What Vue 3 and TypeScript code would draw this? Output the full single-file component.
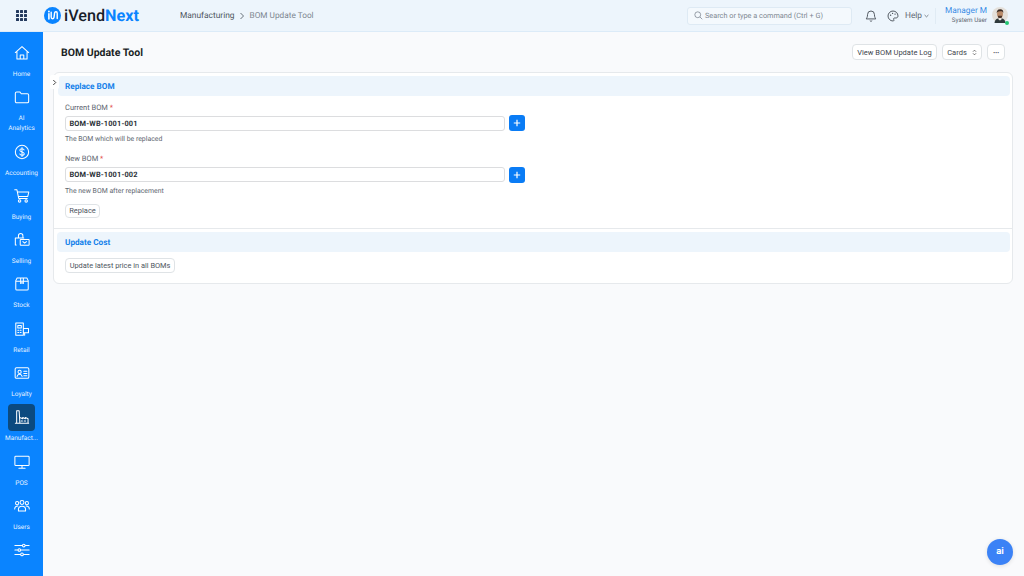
<script setup lang="ts">
interface NavItem { label: string; icon: string; active?: boolean }
const nav: NavItem[] = [
  { label: 'Home', icon: 'home' },
  { label: 'AI\nAnalytics', icon: 'folder' },
  { label: 'Accounting', icon: 'dollar' },
  { label: 'Buying', icon: 'cart' },
  { label: 'Selling', icon: 'sell' },
  { label: 'Stock', icon: 'box' },
  { label: 'Retail', icon: 'retail' },
  { label: 'Loyalty', icon: 'loyalty' },
  { label: 'Manufact...', icon: 'factory', active: true },
  { label: 'POS', icon: 'pos' },
  { label: 'Users', icon: 'users' },
  { label: '', icon: 'sliders' },
]
const dots = Array.from({ length: 9 }, (_, i) => i)
</script>

<template>
  <div class="app">
    <header class="topbar">
      <div class="brand">
        <div class="grid-icon"><i v-for="d in dots" :key="d"></i></div>
        <svg class="logo" viewBox="0 0 18 18">
          <circle cx="9" cy="9" r="9" fill="#0a84ff" />
          <path d="M5.2 7.2v5.4" stroke="#fff" stroke-width="1.7" stroke-linecap="round" fill="none" />
          <circle cx="5.2" cy="4.8" r="1" fill="#fff" />
          <path d="M7.6 5.5v5.2c0 2.2 2.6 2.2 3 .2l.6-4.6c.3-1.8 2.8-1.6 2.8.2v5.6" stroke="#fff" stroke-width="1.5" stroke-linecap="round" fill="none" />
        </svg>
        <div class="wordmark">iVend<b>Next</b></div>
      </div>
      <nav class="crumbs">
        <span class="crumb-a">Manufacturing</span>
        <svg class="crumb-sep" viewBox="0 0 6 8"><path d="M1.5 1l3 3-3 3" fill="none" stroke="#68717a" stroke-width="1" /></svg>
        <span class="crumb-b">BOM Update Tool</span>
      </nav>
      <div class="top-right">
        <div class="search">
          <svg viewBox="0 0 12 12" class="search-ic"><circle cx="5" cy="5" r="3.9" fill="none" stroke="#6b7480" stroke-width=".9" /><path d="M8 8l3 3" stroke="#6b7480" stroke-width=".9" /></svg>
          <span>Search or type a command (Ctrl + G)</span>
        </div>
        <svg class="bell" viewBox="0 0 14 14"><path d="M7 1.2a4 4 0 0 0-4 4c0 3.4-1.3 4.6-1.6 5.2h11.2c-.3-.6-1.6-1.8-1.6-5.2a4 4 0 0 0-4-4zM5.6 12.4c.4.8 2.4.8 2.8 0" fill="none" stroke="#3b424a" stroke-width="1" stroke-linejoin="round" /></svg>
        <svg class="palette" viewBox="0 0 14 14"><path d="M7 1.2a5.8 5.8 0 1 0 0 11.6c1.2 0 1.4-.9.9-1.6-.6-.8-.2-1.9 1-1.9h1.5c1.5 0 2.4-1 2.4-2.4C12.800 3.600 10.200 1.200 7 1.200z" fill="none" stroke="#3b424a" stroke-width="1" /><circle cx="4.200" cy="6" r=".8" fill="#3b424a" /><circle cx="6.500" cy="3.900" r=".8" fill="#3b424a" /><circle cx="9.400" cy="4.800" r=".8" fill="#3b424a" /></svg>
        <div class="help">Help
          <svg viewBox="0 0 6 4" class="help-ch"><path d="M.7.8L3 3l2.300-2.200" fill="none" stroke="#555e68" stroke-width=".9" /></svg>
        </div>
        <div class="vline"></div>
        <div class="user">
          <div class="user-name">Manager M</div>
          <div class="user-role">System User</div>
        </div>
        <div class="avatar">
          <svg viewBox="0 0 16 16">
            <circle cx="8" cy="8" r="8" fill="#e4e0da" />
            <path d="M2.500 16c.3-3.600 2.500-4.800 5.500-4.800s5.200 1.200 5.500 4.800z" fill="#2f3a3c" />
            <path d="M6.500 10.500h3v2L8 13.500l-1.500-1z" fill="#f1ede7" />
            <ellipse cx="8" cy="7" rx="3" ry="3.800" fill="#b98a69" />
            <path d="M4.800 6.200C4.500 2.800 7 2.200 8.300 2.200c2.200 0 3.300 1.600 2.900 4-.4-1.300-1-1.900-2-1.900-1.600.2-4 0-4.400 1.900z" fill="#3a2a22" />
            <path d="M6 8.800h4v1.600L8 11.200l-2-.8z" fill="#4b3428" />
          </svg>
          <span class="online"></span>
        </div>
      </div>
    </header>

    <div class="body">
      <aside class="sidebar">
        <div v-for="item in nav" :key="item.icon" class="nav-item">
          <div class="nav-icon" :class="{ active: item.active }">
            <svg viewBox="0 0 18 18" class="nav-svg">
              <g v-if="item.icon === 'home'">
                <path d="M1.500 8.500L9 1.800l7.500 6.700M3.300 7.200v8.600h11.400V7.200M7 15.800v-4.600h4v4.600" />
              </g>
              <g v-else-if="item.icon === 'folder'">
                <path d="M1.500 4.800c0-.9.600-1.500 1.500-1.500h3.500l1.700 2h6.800c.9 0 1.500.6 1.500 1.500v7.200c0 .9-.6 1.500-1.500 1.500H3c-.9 0-1.500-.6-1.500-1.500z" />
              </g>
              <g v-else-if="item.icon === 'dollar'">
                <circle cx="9" cy="9" r="7.500" />
                <path d="M11.300 6.700c-.3-1-1.200-1.400-2.300-1.400-1.300 0-2.400.7-2.400 1.800 0 2.500 4.900 1.300 4.900 3.800 0 1.100-1.100 1.800-2.500 1.800-1.200 0-2.200-.5-2.500-1.500M9 3.900v10.200" />
              </g>
              <g v-else-if="item.icon === 'cart'">
                <path d="M.8 2h2.500l2 9.800h9.600M4 4.500h12.700l-1.200 5H5" />
                <circle cx="6.300" cy="14.500" r="1.400" />
                <circle cx="13.700" cy="14.500" r="1.400" />
              </g>
              <g v-else-if="item.icon === 'sell'">
                <path d="M2.500 14.500H1.500V6.800h9.500M5 6.500V4.300a2.500 2.500 0 0 1 5 0v2.500" />
                <rect x="7" y="8.500" width="10" height="6.500" rx=".6" />
                <path d="M10 10.800l2 1.800 2-1.800" />
              </g>
              <g v-else-if="item.icon === 'box'">
                <path d="M3.500 2.200h11l1.500 3v9.300c0 .8-.5 1.300-1.300 1.300H3.300c-.8 0-1.300-.5-1.300-1.300V5.200zM2 5.800h14M7.500 2.200v6.300L9 7.500l1.500 1V2.200" />
              </g>
              <g v-else-if="item.icon === 'retail'">
                <path d="M2 16V2.200h8.500V16zM4.300 5h3.900v2.800H4.300zM4.300 10.500h1M7 10.500h1M4.300 13h1M7 13h1M10.500 8.500h5.800v4.800h-5.800M12 13.300V16" />
              </g>
              <g v-else-if="item.icon === 'loyalty'">
                <rect x="1.300" y="3" width="15.400" height="12" rx="1.500" />
                <circle cx="6.300" cy="7.800" r="1.800" />
                <path d="M3.500 12.800c.3-1.700 1.300-2.400 2.800-2.400s2.500.7 2.800 2.400M11 7h3.500M11 9.500h3.500M11 12h3.500" />
              </g>
              <g v-else-if="item.icon === 'factory'">
                <path d="M3 16V2h2.800l.8 14M1.500 16h15M6.500 9.500l3.300 1.500v-1.500l3 1.500V9.500l3 1.500V16" />
                <path d="M8 13.500h1.500M11.500 13.500H13" />
              </g>
              <g v-else-if="item.icon === 'pos'">
                <rect x="1" y="2.500" width="16" height="10.500" rx="1" />
                <path d="M9 13v3M5.500 16h7" />
              </g>
              <g v-else-if="item.icon === 'users'">
                <circle cx="9" cy="5" r="2.200" />
                <circle cx="3.500" cy="5.800" r="1.800" />
                <circle cx="14.500" cy="5.800" r="1.800" />
                <path d="M5 14.500v-1.800c0-2 1.700-3.500 4-3.500s4 1.500 4 3.500v1.800zM.8 12.300c0-2 1.200-3.400 3.600-3.400M17.200 12.300c0-2-1.200-3.400-3.600-3.400" />
              </g>
              <g v-else>
                <path d="M1 4h16M1 9h16M1 14h16" />
                <circle cx="11" cy="4" r="1.500" class="knob" />
                <circle cx="6" cy="9" r="1.500" class="knob" />
                <circle cx="9" cy="14" r="1.500" class="knob" />
              </g>
            </svg>
          </div>
          <div v-if="item.label" class="nav-label">{{ item.label }}</div>
        </div>
      </aside>

      <main class="main">
        <div class="page-head">
          <h1>BOM Update Tool</h1>
          <div class="actions">
            <button class="btn log">View BOM Update Log</button>
            <button class="btn cards">Cards
              <svg viewBox="0 0 6 8" class="updown"><path d="M1.200 3L3 1.200 4.800 3M1.200 5L3 6.800 4.800 5" fill="none" stroke="#444" stroke-width=".9" /></svg>
            </button>
            <button class="btn more">···</button>
          </div>
        </div>

        <section class="card">
          <div class="toggle">
            <svg viewBox="0 0 6 8"><path d="M1.500 1l3 3-3 3" fill="none" stroke="#333" stroke-width="1.100" /></svg>
          </div>
          <div class="section first">
            <div class="sec-head">Replace BOM</div>
            <div class="form">
              <div class="field">
                <label>Current BOM <em>*</em></label>
                <div class="input-row">
                  <div class="input">BOM-WB-1001-001</div>
                  <button class="plus">
                    <svg viewBox="0 0 10 10"><path d="M5 1v8M1 5h8" stroke="#fff" stroke-width="1.500" /></svg>
                  </button>
                </div>
                <p>The BOM which will be replaced</p>
              </div>
              <div class="field second">
                <label>New BOM <em>*</em></label>
                <div class="input-row">
                  <div class="input">BOM-WB-1001-002</div>
                  <button class="plus">
                    <svg viewBox="0 0 10 10"><path d="M5 1v8M1 5h8" stroke="#fff" stroke-width="1.500" /></svg>
                  </button>
                </div>
                <p>The new BOM after replacement</p>
              </div>
              <button class="btn small replace">Replace</button>
            </div>
          </div>
          <div class="section">
            <div class="sec-head">Update Cost</div>
            <div class="form cost">
              <button class="btn small update">Update latest price in all BOMs</button>
            </div>
          </div>
        </section>
      </main>
    </div>

    <div class="ai-fab"><span>ai</span></div>
  </div>
</template>

<style scoped>
.app {
  width: 1024px;
  height: 576px;
  overflow: hidden;
  display: flex;
  flex-direction: column;
  background: #f9fafc;
  font-family: "Roboto", "Liberation Sans", sans-serif;
  text-rendering: geometricPrecision;
  color: #1f272e;
  position: relative;
}
.topbar {
  height: 32px;
  flex: none;
  display: flex;
  align-items: center;
  background: #edf5fc;
  border-bottom: 1px solid #dcebf8;
  box-sizing: border-box;
}
.brand { display: flex; align-items: center; width: 180px; flex: none; padding-left: 16px; box-sizing: border-box; }
.grid-icon { display: grid; grid-template-columns: repeat(3, 3px); gap: 1px; width: 11px; }
.grid-icon i { width: 3px; height: 3px; background: #243a5e; border-radius: .5px; }
.logo { width: 17px; height: 17px; margin-left: 17px; }
.wordmark { margin-left: 3px; font-size: 16.200px; font-weight: 500; color: #17202a; }
.wordmark b { color: #0a84ff; font-weight: 700; }
.crumbs { display: flex; align-items: center; font-size: 8.400px; }
.crumb-a { color: #4d5661; }
.crumb-b { color: #7c858f; font-size: 8.250px; }
.crumb-sep { width: 6px; height: 8px; margin: 0 4.500px; }
.top-right { margin-left: auto; display: flex; align-items: center; }
.search {
  width: 165px; height: 18px; box-sizing: border-box;
  display: flex; align-items: center; gap: 2px; padding-left: 6px;
  background: #f4f9fd; border: 1px solid #deeaf4; border-radius: 3px;
  font-size: 7.300px; color: #7d8791;
}
.search-ic { width: 9px; height: 9px; flex: none; }
.bell { width: 12px; height: 12px; margin-left: 13px; }
.palette { width: 12px; height: 12px; margin-left: 10px; }
.help { display: flex; align-items: center; justify-content: space-between; width: 24px; margin-left: 6px; font-size: 8.300px; color: #5e6772; }
.help-ch { width: 5px; height: 4px; flex: none; }
.vline { width: 1px; height: 16px; background: #e0ebf4; margin-left: 6px; }
.user { margin-left: 8px; text-align: right; width: 43px; }
.user-name { font-size: 8.300px; line-height: 10px; color: #3b8de6; white-space: nowrap; }
.user-role { font-size: 6.300px; line-height: 9px; color: #5e6772; white-space: nowrap; }
.avatar { position: relative; width: 16px; height: 16px; margin: -2px 16px 0 5px; }
.avatar svg { width: 16px; height: 16px; display: block; }
.online { position: absolute; right: -1px; bottom: -2px; width: 4px; height: 4px; border-radius: 50%; background: #23c772; }
.body { flex: 1; display: flex; min-height: 0; }
.sidebar {
  width: 43px; flex: none; background: #0a84ff;
  display: flex; flex-direction: column; align-items: center;
  padding-top: 7.5px; gap: 4.8px; box-sizing: border-box;
}
.nav-item { width: 43px; display: flex; flex-direction: column; align-items: center; }
.nav-icon { width: 27px; height: 27px; display: flex; align-items: center; justify-content: center; border-radius: 4px; }
.nav-icon.active { background: #0b4a80; }
.nav-svg { width: 16px; height: 16px; fill: none; stroke: #fff; stroke-width: 1.150; stroke-linecap: round; stroke-linejoin: round; }
.knob { fill: #0a84ff; }
.nav-label { margin-top: 2.500px; font-size: 6.500px; line-height: 10px; color: #e4f1ff; text-align: center; font-weight: 400; white-space: pre-line; }
.main { flex: 1; padding: 0 11px 0 10px; min-width: 0; }
.page-head { height: 40px; display: flex; align-items: center; justify-content: space-between; padding: 0 8px 0 8px; }
h1 { margin: 0; font-size: 10.500px; font-weight: 700; color: #1a1f25; }
.actions { display: flex; gap: 5px; }
.btn {
  height: 16px; box-sizing: border-box; padding: 0 4px;
  background: #fff; border: 1px solid #dfe3e6; border-radius: 4px;
  font-family: inherit; font-size: 7.500px; color: #3d444c;
  display: flex; align-items: center; justify-content: center; white-space: nowrap;
}
.log { width: 85px; }
.cards { width: 40px; gap: 5px; }
.more { width: 18px; padding: 0; font-weight: 700; letter-spacing: -.3px; }
.updown { width: 5px; height: 7px; flex: none; }
.card {
  position: relative; background: #fff;
  border: 1px solid #e6e9ec; border-radius: 6px;
  height: 212px; box-sizing: border-box;
}
.toggle {
  position: absolute; left: -4px; top: 2px; width: 9px; height: 14px;
  background: #fff; border-radius: 2px; display: flex; align-items: center; justify-content: center;
}
.toggle svg { width: 5px; height: 7px; }
.section { padding: 3px 2px 0 3px; }
.section.first { padding-left: 4px; border-bottom: 1px solid #e6e9ec; height: 156px; box-sizing: border-box; }
.sec-head {
  height: 20px; display: flex; align-items: center; padding: 1px 0 0 7px; box-sizing: border-box;
  background: #edf5fc; border-radius: 4px;
  font-size: 8.200px; font-weight: 700; color: #1280ea;
}
.section:not(.first) .sec-head { padding-left: 8px; }
.form { padding: 7px 0 0 7px; }
.form.cost { padding: 6px 0 0 8px; }
.field { width: 461px; }
.field.second { margin-top: 9.500px; }
.field.second .input-row { margin-top: 3px; }
label { display: block; font-size: 7.500px; line-height: 10px; color: #5e6670; }
em { font-style: normal; color: #e24c4c; }
.input-row { display: flex; align-items: center; gap: 4px; margin-top: 2px; }
.input {
  width: 440px; height: 15px; box-sizing: border-box; padding-left: 3.500px;
  display: flex; align-items: center;
  background: #fff; border: 1.500px solid #dcdddf; border-radius: 3px;
  font-size: 7.400px; font-weight: 700; color: #2b3137; letter-spacing: .15px;
}
.plus {
  width: 16px; height: 16px; flex: none; padding: 0; border: 0; border-radius: 3px;
  background: #0a7cf5; display: flex; align-items: center; justify-content: center;
}
.plus svg { width: 8px; height: 8px; }
p { margin: 3px 0 0; font-size: 6.900px; line-height: 10px; color: #5e6670; }
.small { height: 14px; padding: 0 4px; color: #4d555e; }
.replace { margin-top: 8px; width: 35px; }
.update { width: 110px; height: 15px; padding: 0; font-size: 7.400px; }
.ai-fab {
  position: absolute; left: 987px; top: 539px; width: 26px; height: 26px; border-radius: 50%;
  background: #3b82f6; display: flex; align-items: center; justify-content: center;
  box-shadow: 0 1px 4px rgba(0,0,0,.12);
}
.ai-fab span { font-size: 9.5px; font-weight: 700; color: #fff; line-height: 1; }
</style>

<style>
html, body { margin: 0; padding: 0; }
</style>
